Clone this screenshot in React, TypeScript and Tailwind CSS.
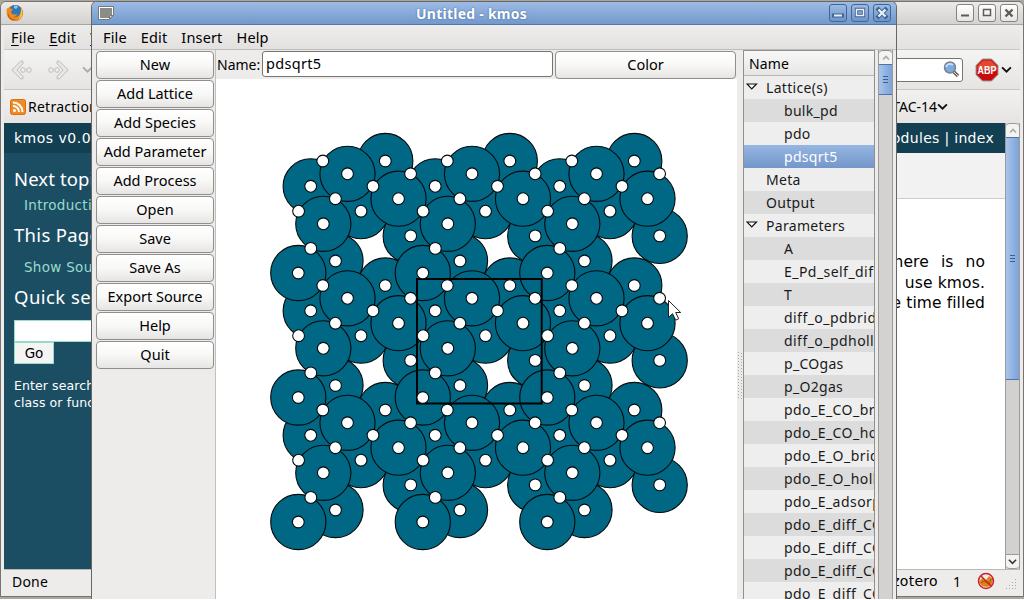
import React from "react";

const UI = "font-['Noto_Sans',sans-serif]";
const PERIOD = 124.5;
const BACK = [[310.7, 186.3], [385.3, 161], [361, 211.2], [410.7, 235.9], [335.5, 261]];
const FRONT = [[347.5, 173.8], [398.5, 198.7], [323.3, 223.8], [298.3, 273]];
const FREE = [[322.8, 161], [373, 186.3], [410.6, 173.8], [298.6, 211.2], [335.4, 198.7], [310.8, 248.4]];

function tile(points: number[][]) {
  const out: number[][] = [];
  for (let i = 0; i < 3; i++)
    for (let j = 0; j < 3; j++) for (const [x, y] of points) out.push([x + i * PERIOD, y + j * PERIOD]);
  return out;
}

function Lattice() {
  return (
    <svg className="block" width="521" height="520" viewBox="216 79 521 520">
      <g fill="#006884" stroke="#05090b" strokeWidth="1.100">
        {tile(BACK).map(([x, y], i) => <circle key={i} cx={x} cy={y} r="27.6" />)}
      </g>
      <g fill="#006884" stroke="#05090b" strokeWidth="1.100">
        {tile(FRONT).map(([x, y], i) => <circle key={i} cx={x} cy={y} r="27.6" />)}
      </g>
      <rect x="417" y="279" width="124.7" height="124.5" fill="none" stroke="#000" strokeWidth="2" />
      <g fill="#fff" stroke="#05090b" strokeWidth="1.100">
        {tile([...BACK, ...FRONT, ...FREE]).map(([x, y], i) => <circle key={i} cx={x} cy={y} r="5.9" />)}
      </g>
      <path d="M668.5 300.5v17l4-3.8 3.2 6.5 3-1.4-3-6.3h5z" fill="#fff" stroke="#222" />
    </svg>
  );
}

function WindowButtons({ active }: { active?: boolean }) {
  const box = active
    ? "size-[18px] rounded-[3px] border border-[#426695] bg-linear-to-b from-[#9bbbe4] to-[#7094c7]"
    : "size-[18px] rounded-[3px] border border-[#858380] bg-linear-to-b from-white to-[#e7e6e4]";
  const ink = active ? "#e9f0fa" : "#5c5b58";
  const edge = active ? "#3f6294" : "none";
  const shapes = ["M4 10.500h8", "M4.500 4.500h7v6h-7z", "M4.500 4.500l7 7M11.500 4.500l-7 7"];
  const weights = [2, 1.5, 2.4];
  return (
    <div className="flex gap-[4px]">
      {shapes.map((d, i) => (
        <span key={i} className={box}>
          <svg width="16" height="16" viewBox="0 0 16 16" fill="none">
            <path d={d} stroke={edge} strokeWidth={weights[i] + 1.800} strokeLinecap="square" />
            <path d={d} stroke={ink} strokeWidth={weights[i]} />
          </svg>
        </span>
      ))}
    </div>
  );
}

function Chevron({ up, color = "#333", size = 10 }: { up?: boolean; color?: string; size?: number }) {
  return (
    <svg width={size} height={size} viewBox="0 0 10 10" fill="none" className="shrink-0">
      <path d={up ? "M2 6.5l3-3 3 3" : "M1 3l4 4 4-4"} stroke={color} strokeWidth="1.7" />
    </svg>
  );
}

function Grip() {
  return (
    <span className="flex flex-col gap-[2px]">
      <i className="h-px w-[5px] bg-[#3e608f]" />
      <i className="h-px w-[5px] bg-[#3e608f]" />
      <i className="h-px w-[5px] bg-[#3e608f]" />
    </span>
  );
}

function FirefoxIcon() {
  return (
    <svg width="18" height="18" viewBox="0 0 18 18">
      <circle cx="9" cy="9" r="8" fill="#d45b13" />
      <circle cx="9.5" cy="7" r="6" fill="#2e78b8" />
      <path d="M8 2c2-1 4 0 4 1l-2 2-2-1z" fill="#83c8e8" />
      <path d="M1 4c1 1 2 0 3-1 0 2 1 2 3 2-1 1-1 2-2 3 1 3 4 3 6 2 0 2-2 3-4 3 4 1 8-2 8-7 3 6-1 11-6 11C3 17-1 11 1 4z" fill="#f08a1c" />
      <path d="M15 4c3 5 1 10-3 12 3-4 3-8 3-12z" fill="#f9cf3a" />
      <path d="M2 8c0 5 4 8 8 8-5 1-9-3-8-8z" fill="#a93a0d" />
    </svg>
  );
}

function NavArrow({ flip }: { flip?: boolean }) {
  return (
    <svg width="21" height="20" viewBox="0 0 21 20" fill="none" stroke="#bdbcb9" className={flip ? "-scale-x-100" : ""}>
      <path d="M10 .8L.8 10l9.2 9.2 2-.8v-2L6 10l6-6.400V1.500z" fill="#e7e6e4" />
      <circle cx="12" cy="10" r="2.300" fill="#eee" />
      <circle cx="18" cy="10" r="2.300" fill="#eee" />
    </svg>
  );
}

function Browser() {
  return (
    <div className={`flex h-[596px] w-[1024px] flex-col rounded-t-md border border-[#77736f] bg-[#edeceb] ${UI}`}>
      <div className="flex h-[23px] shrink-0 items-center justify-between rounded-t-md border-b border-[#a7a5a1] bg-linear-to-b from-[#eceae8] to-[#d4d2d0] pr-[5px] pl-[5px]">
        <FirefoxIcon />
        <WindowButtons />
      </div>
      <div className="mx-[3px] flex h-[25px] shrink-0 items-center gap-[14px] border-b border-[#c9c7c4] bg-linear-to-b from-[#ececea] to-[#e3e2e0] pt-[2px] pl-[7px] text-[14.5px] tracking-[.25px] text-black">
        <span><u className="underline-offset-2">F</u>ile</span>
        <span><u className="underline-offset-2">E</u>dit</span>
        <span><u className="underline-offset-2">V</u>iew</span>
      </div>
      <div className="mx-[3px] flex h-[40px] shrink-0 items-center border-b border-[#c9c7c4] bg-linear-to-b from-[#f4f4f3] to-[#e5e4e2] pl-[7px]">
        <NavArrow />
        <span className="ml-[16px] flex"><NavArrow flip /></span>
        <span className="ml-[13px] flex"><Chevron color="#aaa" size={11} /></span>
        <div className="ml-auto flex h-[24px] w-[200px] items-center justify-end rounded-[3px] border border-[#777571] bg-white pr-[1px]">
          <svg width="19" height="19" viewBox="0 0 19 19" fill="none">
            <path d="M11 11l5 5" stroke="#666" strokeWidth="3.500" />
            <path d="M11 11l5 5" stroke="#ddd" strokeWidth="1" />
            <circle cx="8" cy="7.500" r="5.500" fill="#78aae4" stroke="#7c8188" strokeWidth="1.500" />
            <path d="M4 7c1-3 4-4 7-2" stroke="#c5def8" strokeWidth="2" />
          </svg>
        </div>
        <svg width="24" height="24" viewBox="0 0 24 24" className="ml-[12px]">
          <path d="M7.500 1h9l6.500 6.500v9L16.500 23h-9L1 16.500v-9z" fill="#c70d0d" stroke="#999" />
          <path d="M8 2.500h8l5.500 5.500v4H2.500V8z" fill="#e14932" />
          <text x="12" y="16" textAnchor="middle" fontFamily="Liberation Sans" fontWeight="700" fontSize="11" textLength="19" lengthAdjust="spacingAndGlyphs" fill="#fff">ABP</text>
        </svg>
        <span className="mr-[8px] ml-[2px] flex"><Chevron color="#111" size={11} /></span>
      </div>
      <div className="mx-[3px] flex h-[33px] shrink-0 items-center bg-linear-to-b from-[#f2f1f0] to-[#e5e4e2] pl-[6px] text-[14px] text-black">
        <svg width="16" height="16" viewBox="0 0 16 16" fill="none" stroke="#fff" strokeWidth="2">
          <rect x=".5" y=".5" width="15" height="15" rx="2" fill="#f08a24" stroke="#d96f10" strokeWidth="1" />
          <circle cx="4.500" cy="11.500" r="1.500" fill="#fff" stroke="none" />
          <path d="M3 7a6 6 0 0 1 6 6M3 3.500a9.500 9.500 0 0 1 9.500 9.500" />
        </svg>
        <span className="ml-[2px] tracking-[.25px] whitespace-nowrap">Retraction Watch</span>
        <span className="mr-0 ml-auto">TAC-14</span>
        <span className="mr-[72px] flex"><Chevron color="#111" size={11} /></span>
      </div>
      <div className="mx-[3px] flex min-h-0 flex-1 font-['DejaVu_Sans',sans-serif]">
        <div className="flex min-w-0 flex-1 flex-col">
          <div className="flex h-[30px] shrink-0 items-center justify-between bg-[#133f52] pr-[11px] pl-[10px] text-[14px] text-white">
            <span className="tracking-[.5px]">kmos v0.0.1</span>
            <span className="tracking-[.3px]">modules | index</span>
          </div>
          <div className="flex min-h-0 flex-1">
            <aside className="w-[230px] shrink-0 bg-[#1c4e63] pt-[14px] pl-[10px] whitespace-nowrap text-white">
              <h3 className="font-['Noto_Sans',sans-serif] text-[18.500px] leading-[24px] tracking-[.1px]">Next topic</h3>
              <p className="pt-px pl-[10px] text-[13.500px] leading-[27px] tracking-[.3px] text-[#98dbcc]">Introduction</p>
              <h3 className="mt-[4px] font-['Noto_Sans',sans-serif] text-[18.500px] leading-[24px] tracking-[.3px]">This Page</h3>
              <p className="pt-[7px] pl-[10px] text-[13.500px] leading-[26px] tracking-[.3px] text-[#98dbcc]">Show Source</p>
              <h3 className="mt-[4px] font-['Noto_Sans',sans-serif] text-[18.500px] leading-[26px] tracking-[.45px]">Quick search</h3>
              <div className="mt-[10px] h-[22px] w-[180px] border border-[#98dbcc] bg-white" />
              <div className="flex h-[22px] w-[40px] items-center justify-center border border-[#98dbcc] bg-[#f4f4f2] text-[13.500px] text-black">Go</div>
              <p className="mt-[13px] text-[12.500px] leading-[17px] tracking-[.1px]">Enter search terms or a module,<br />class or function name.</p>
            </aside>
            <main className="flex-1 bg-white text-right text-[15.500px] leading-[20.500px] text-black">
              <div className="h-[46px] border-b border-[#ccc] bg-[#f2f2f2]" />
              <div className="pt-[53px] pr-[20px]">
                <p className="tracking-[.1px] [word-spacing:7px]">there is no</p>
                <p className="tracking-[.15px]">use kmos.</p>
                <p className="tracking-[.1px]">the time filled</p>
              </div>
            </main>
          </div>
        </div>
        <div className="flex w-[15px] shrink-0 flex-col border-x border-[#9d9b98] bg-[#d3d1cf]">
          <div className="flex h-[14px] items-center justify-center rounded-t-sm border-t border-[#9d9b98] bg-[#f3f3f2]"><Chevron up color="#aaa" /></div>
          <div className="flex h-[243px] items-center justify-center border-y border-[#4d75ad] bg-linear-to-r from-[#a8c5ec] to-[#7ca2d8]"><Grip /></div>
          <div className="mt-auto flex h-[15px] items-center justify-center rounded-b-sm border-y border-[#9d9b98] bg-[#f3f3f2]"><Chevron size={9} /></div>
        </div>
      </div>
      <div className="mx-[3px] flex h-[27px] shrink-0 items-center border-t border-[#bbb9b6] pb-[4px] pl-[8px] text-[14px] text-black">
        <span className="tracking-[.2px]">Done</span>
        <span className="ml-auto font-['DejaVu_Sans',sans-serif] text-[14px] tracking-[.3px]">zotero</span>
        <span className="ml-[15px]">1</span>
        <svg width="18" height="18" viewBox="0 0 18 18" className="ml-[16px]">
          <path d="M2 10l3-4 4 2 3-4 4 3-1 6-5 2-5-1z" fill="#df8217" />
          <path d="M4 11l3-2 5 3 2-5" stroke="#8b5a18" fill="none" />
          <circle cx="9" cy="9" r="7.500" fill="none" stroke="#cf2027" strokeWidth="1.500" />
          <path d="M4 4l10 10" stroke="#cf2027" strokeWidth="1.500" />
        </svg>
        <svg width="12" height="12" viewBox="0 0 12 12" className="mt-[8px] mr-[2px] ml-[11px]" fill="#aaa">
          <path d="M9 0h1v1H9zM6 3h1v1H6zM9 3h1v1H9zM3 6h1v1H3zM6 6h1v1H6zM9 6h1v1H9zM0 9h1v1H0zM3 9h1v1H3zM6 9h1v1H6zM9 9h1v1H9z" />
        </svg>
      </div>
    </div>
  );
}

const ACTIONS = ["New", "Add Lattice", "Add Species", "Add Parameter", "Add Process", "Open", "Save", "Save As", "Export Source", "Help", "Quit"];
const BUTTON = "flex items-center justify-center rounded-[4px] border border-[#918f8c] bg-linear-to-b from-white via-[#f8f8f7] to-[#e6e5e3] text-[14.500px] text-black";

type Row = { label: string; kind: "group" | "top" | "leaf"; selected?: boolean };
const ROWS: Row[] = [
  { label: "Lattice(s)", kind: "group" },
  { label: "bulk_pd", kind: "leaf" },
  { label: "pdo", kind: "leaf" },
  { label: "pdsqrt5", kind: "leaf", selected: true },
  { label: "Meta", kind: "top" },
  { label: "Output", kind: "top" },
  { label: "Parameters", kind: "group" },
  ...["A", "E_Pd_self_diff", "T", "diff_o_pdbridge", "diff_o_pdhollow", "p_COgas", "p_O2gas", "pdo_E_CO_bridge", "pdo_E_CO_hollow", "pdo_E_O_bridge", "pdo_E_O_hollow", "pdo_E_adsorption", "pdo_E_diff_CO_br", "pdo_E_diff_CO_ho", "pdo_E_diff_CO_hh", "pdo_E_diff_CO_bb"].map(
    (label): Row => ({ label, kind: "leaf" }),
  ),
];

function Tree() {
  return (
    <div className="flex w-[132px] shrink-0 flex-col overflow-hidden border-x border-t border-[#918f8c] bg-[#eee] text-[14px] whitespace-nowrap text-[#1a1a1a]">
      <div className="flex h-[25px] shrink-0 items-center border-b border-[#b8b6b3] bg-linear-to-b from-[#f8f8f8] to-[#e7e6e5] pl-[5px] tracking-[.1px] text-black">Name</div>
      {ROWS.map((r, i) => (
        <div
          key={i}
          className={`flex h-[23px] shrink-0 items-center ${r.selected ? "bg-linear-to-b from-[#96b6e2] to-[#7397ca] text-white" : i % 2 ? "bg-[#dcdcdc]" : "bg-[#eee]"} ${r.kind === "leaf" ? "pl-[40px]" : r.kind === "top" ? "pl-[22px]" : "pl-[2px]"} ${r.label.length > 9 && r.kind === "leaf" ? "tracking-[.45px]" : "tracking-[.3px]"}`}
        >
          {r.kind === "group" && (
            <svg width="12" height="8" viewBox="0 0 12 8" className="mr-[8px] mb-[2px]">
              <path d="M1 1h9.500L5.750 6z" fill="#fff" stroke="#111" strokeWidth="1.200" />
            </svg>
          )}
          {r.label}
        </div>
      ))}
    </div>
  );
}

function Kmos() {
  return (
    <div className={`absolute top-[1px] left-[91px] flex h-[599px] w-[806px] flex-col overflow-hidden rounded-t-[6px] border border-b-0 border-[#686663] bg-[#edeceb] ${UI}`}>
      <div className="flex h-[23px] shrink-0 items-center justify-between border-b border-[#5276a8] bg-linear-to-b from-[#9dbce6] to-[#7398cb] pr-[5px] pl-[6px]">
        <svg width="16" height="14" viewBox="0 0 16 14">
          <path d="M.5.500h15v9l-4 4H.5z" fill="#fff" stroke="#777" />
          <path d="M2 2h12v7h-3v3H2z" fill="#8a8c87" />
          <path d="M11.500 13v-3.500H15z" fill="#ddd" stroke="#777" />
        </svg>
        <span className="text-[14px] font-bold tracking-[.25px] text-white [text-shadow:0_0_2px_#3e6294]">Untitled - kmos</span>
        <WindowButtons active />
      </div>
      <div className="flex h-[25px] shrink-0 items-center gap-[14px] border-b border-[#bfbdba] bg-linear-to-b from-[#eeedec] to-[#e2e1df] pt-[2px] pl-[11px] text-[14.500px] tracking-[.15px] text-black">
        <span>File</span><span>Edit</span><span>Insert</span><span>Help</span>
      </div>
      <div className="flex min-h-0 flex-1">
        <div className="flex w-[124px] shrink-0 flex-col gap-[1px] border-r border-[#c2c0bd] pt-[1px] pl-[4px]">
          {ACTIONS.map((label) => <button key={label} className={`${BUTTON} h-[28px] w-[118px] shrink-0`}>{label}</button>)}
        </div>
        <div className="flex w-[521px] shrink-0 flex-col bg-white">
          <div className="flex h-[29px] shrink-0 items-start bg-[#edeceb] pt-[1px]">
            <span className="w-[46px] shrink-0 pl-[1px] text-[14px] leading-[28px] text-black">Name:</span>
            <div className="flex h-[26px] w-[291px] items-center rounded-[3px] border border-[#777571] bg-white pl-[3px] text-[14.500px] tracking-[.3px] text-black">pdsqrt5</div>
            <button className={`${BUTTON} ml-[2px] h-[28px] w-[181px]`}>Color</button>
          </div>
          <Lattice />
        </div>
        <div className="flex w-[6px] shrink-0 items-center justify-center">
          <svg width="6" height="48" viewBox="0 0 6 48" className="mt-[102px]">
            {Array.from({ length: 16 }, (_, i) => (
              <path key={i} d={`M1 ${i * 3}h1v1h-1zM4 ${i * 3 + 1}h1v1h-1z`} fill="#aaa8a5" />
            ))}
          </svg>
        </div>
        <Tree />
        <div className="ml-[3px] flex w-[15px] shrink-0 flex-col border-x border-[#9d9b98] bg-[#d3d2d0]">
          <div className="flex h-[14px] items-center justify-center rounded-t-sm border-t border-[#918f8c] bg-[#f3f3f2]"><Chevron up color="#aaa" /></div>
          <div className="flex h-[31px] items-center justify-center border-y border-[#4d75ad] bg-linear-to-r from-[#a8c5ec] to-[#7ca2d8]"><Grip /></div>
        </div>
      </div>
    </div>
  );
}

export default function App() {
  return (
    <div className="relative h-[599px] w-[1024px] overflow-hidden bg-[#aaa7a1] pt-[1px]">
      <Browser />
      <Kmos />
    </div>
  );
}
